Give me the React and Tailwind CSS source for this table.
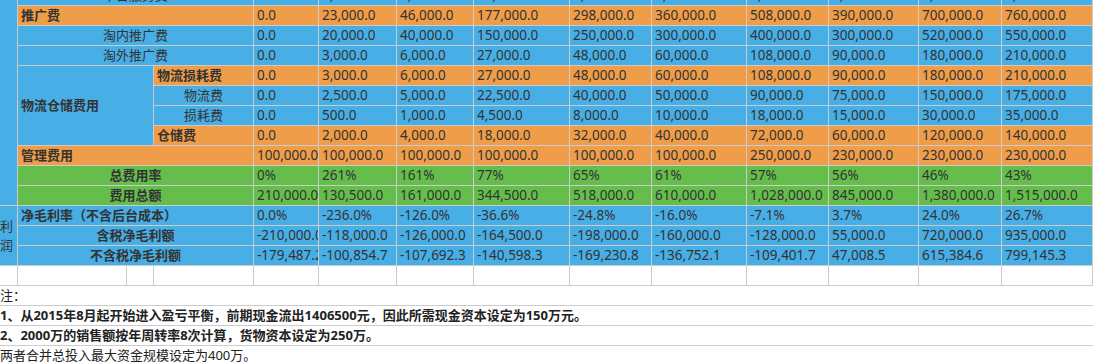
// App.jsx

const BLUE = "bg-[#48aee6]";
const ORANGE = "bg-[#ef9d48]";
const GREEN = "bg-[#65be4c]";

const rows = [
  { label: "平台服务费", kind: "sub", bg: BLUE, vals: ["0.0", "3,000.0", "6,000.0", "27,000.0", "4,800.0", "6,000.0", "9,000.0", "8,000.0", "9,000.0", "9,500.0"] },
  { label: "推广费", kind: "head", bg: ORANGE, vals: ["0.0", "23,000.0", "46,000.0", "177,000.0", "298,000.0", "360,000.0", "508,000.0", "390,000.0", "700,000.0", "760,000.0"] },
  { label: "淘内推广费", kind: "sub", bg: BLUE, vals: ["0.0", "20,000.0", "40,000.0", "150,000.0", "250,000.0", "300,000.0", "400,000.0", "300,000.0", "520,000.0", "550,000.0"] },
  { label: "淘外推广费", kind: "sub", bg: BLUE, vals: ["0.0", "3,000.0", "6,000.0", "27,000.0", "48,000.0", "60,000.0", "108,000.0", "90,000.0", "180,000.0", "210,000.0"] },
  { label: "物流损耗费", kind: "inner-head", bg: ORANGE, group: true, vals: ["0.0", "3,000.0", "6,000.0", "27,000.0", "48,000.0", "60,000.0", "108,000.0", "90,000.0", "180,000.0", "210,000.0"] },
  { label: "物流费", kind: "inner-sub", bg: BLUE, vals: ["0.0", "2,500.0", "5,000.0", "22,500.0", "40,000.0", "50,000.0", "90,000.0", "75,000.0", "150,000.0", "175,000.0"] },
  { label: "损耗费", kind: "inner-sub", bg: BLUE, vals: ["0.0", "500.0", "1,000.0", "4,500.0", "8,000.0", "10,000.0", "18,000.0", "15,000.0", "30,000.0", "35,000.0"] },
  { label: "仓储费", kind: "inner-head", bg: ORANGE, vals: ["0.0", "2,000.0", "4,000.0", "18,000.0", "32,000.0", "40,000.0", "72,000.0", "60,000.0", "120,000.0", "140,000.0"] },
  { label: "管理费用", kind: "head", bg: ORANGE, vals: ["100,000.0", "100,000.0", "100,000.0", "100,000.0", "100,000.0", "100,000.0", "250,000.0", "230,000.0", "230,000.0", "230,000.0"] },
  { label: "总费用率", kind: "center", bg: GREEN, vals: ["0%", "261%", "161%", "77%", "65%", "61%", "57%", "56%", "46%", "43%"] },
  { label: "费用总额", kind: "center", bg: GREEN, vals: ["210,000.0", "130,500.0", "161,000.0", "344,500.0", "518,000.0", "610,000.0", "1,028,000.0", "845,000.0", "1,380,000.0", "1,515,000.0"] },
  { label: "净毛利率（不含后台成本）", kind: "head", bg: BLUE, profit: true, vals: ["0.0%", "-236.0%", "-126.0%", "-36.6%", "-24.8%", "-16.0%", "-7.1%", "3.7%", "24.0%", "26.7%"] },
  { label: "含税净毛利额", kind: "center", bg: BLUE, vals: ["-210,000.0", "-118,000.0", "-126,000.0", "-164,500.0", "-198,000.0", "-160,000.0", "-128,000.0", "55,000.0", "720,000.0", "935,000.0"] },
  { label: "不含税净毛利额", kind: "center", bg: BLUE, vals: ["-179,487.2", "-100,854.7", "-107,692.3", "-140,598.3", "-169,230.8", "-136,752.1", "-109,401.7", "47,008.5", "615,384.6", "799,145.3"] },
];

function Label({ row }) {
  const base = `${row.bg} flex items-center overflow-hidden whitespace-nowrap text-[13px]`;
  if (row.kind === "head") return <div className={`${base} col-span-3 pl-[3px] font-bold`}>{row.label}</div>;
  if (row.kind === "sub") return <div className={`${base} col-span-3 justify-center`}>{row.label}</div>;
  if (row.kind === "center") return <div className={`${base} col-span-3 justify-center font-bold`}>{row.label}</div>;
  if (row.kind === "inner-head") return <div className={`${base} pl-[3px] font-bold`}>{row.label}</div>;
  return <div className={`${base} justify-center`}>{row.label}</div>;
}

export default function App() {
  return (
    <div className="h-[363px] w-[1093px] overflow-hidden bg-white text-[#333] font-['Noto_Sans','Noto_Sans_CJK_SC',sans-serif]">
      <div className="-mt-[14px] grid w-[1093px] grid-cols-[17px_108px_26px_99px_64px_77px_76px_95px_81px_94px_81px_89px_82px_90px] grid-rows-[repeat(15,19px)] gap-px border-r border-b border-[#cccccc] bg-[#cccccc]">
        {rows.map((row, i) => (
          <div key={i} className="contents">
            {i === 0 && <div className={`${BLUE} row-span-11`} />}
            {row.profit && (
              <div className={`${BLUE} row-span-3 flex items-center overflow-hidden text-[13px] leading-[19px]`}>
                <span className="w-[13px]">利润</span>
              </div>
            )}
            {row.group && (
              <div className={`${BLUE} col-span-2 row-span-4 flex items-center pl-[3px] text-[13px] font-bold whitespace-nowrap`}>
                物流仓储费用
              </div>
            )}
            <Label row={row} />
            {row.vals.map((v, j) => (
              <div key={j} className={`${row.bg} flex items-center overflow-hidden whitespace-nowrap pl-[3px] text-[13.5px]`}>
                {v}
              </div>
            ))}
          </div>
        ))}
        {Array.from({ length: 14 }).map((_, k) => (
          <div key={"e" + k} className="bg-white" />
        ))}
      </div>

      <div className="text-[13px] text-[#222]">
        <div className="flex h-[20px] items-center border-b border-[#cccccc]">注：</div>
        <div className="flex h-[20px] items-center border-b border-[#cccccc] font-bold">
          1、从2015年8月起开始进入盈亏平衡，前期现金流出1406500元，因此所需现金资本设定为150万元。
        </div>
        <div className="flex h-[20px] items-center border-b border-[#cccccc] font-bold">
          2、2000万的销售额按年周转率8次计算，货物资本设定为250万。
        </div>
        <div className="flex h-[20px] items-center">两者合并总投入最大资金规模设定为400万。</div>
      </div>
    </div>
  );
}
